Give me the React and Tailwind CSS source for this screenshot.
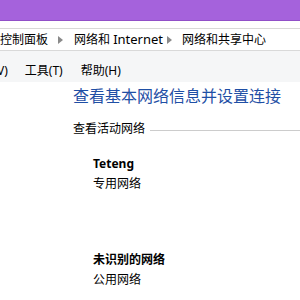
export default function App() {
  const font = { fontFamily: '"Noto Sans", "Noto Sans CJK SC", sans-serif' };
  return (
    <div className="w-[300px] h-[300px] overflow-hidden bg-white text-[12px] text-black" style={font}>
      {/* Title bar */}
      <div className="h-[21px] bg-[#a562dc] border-b border-[#9150c8]" />

      {/* Address bar */}
      <div className="pt-[7px]">
        <div className="h-[23px] border-y border-[#d9d9d9] flex items-center whitespace-nowrap leading-none">
          <span>控制面板</span>
          <span className="ml-[10px] mr-[11px] w-0 h-0 border-l-[5px] border-l-[#8a8a8a] border-y-[4px] border-y-transparent" />
          <span>网络和 <span className="text-[13px]">Internet</span></span>
          <span className="ml-[4px] mr-[10px] w-0 h-0 border-l-[5px] border-l-[#8a8a8a] border-y-[4px] border-y-transparent" />
          <span>网络和共享中心</span>
        </div>
      </div>

      {/* Menu bar */}
      <div className="h-[31px] bg-[#f5f6f7] flex items-center whitespace-nowrap leading-none pt-[9px]">
        <span className="ml-[-3px]">V)</span>
        <span className="ml-[17px]">工具(T)</span>
        <span className="ml-[18px]">帮助(H)</span>
      </div>

      {/* Content */}
      <div className="pl-[73px] pt-[2px]">
        <div className="text-[16px] text-[#1f4fa5] leading-[24px] whitespace-nowrap">查看基本网络信息并设置连接</div>
        <div className="mt-[12px] flex items-center">
          <span className="whitespace-nowrap">查看活动网络</span>
          <div className="flex-1 h-px bg-[#cccccc] ml-[5px] mt-[2px]" />
        </div>

        <div className="pl-[20px] mt-[16px] leading-[20px]">
          <div className="font-bold">Teteng</div>
          <div>专用网络</div>
        </div>

        <div className="pl-[20px] mt-[56px] leading-[20px]">
          <div className="font-bold">未识别的网络</div>
          <div>公用网络</div>
        </div>
      </div>
    </div>
  );
}
